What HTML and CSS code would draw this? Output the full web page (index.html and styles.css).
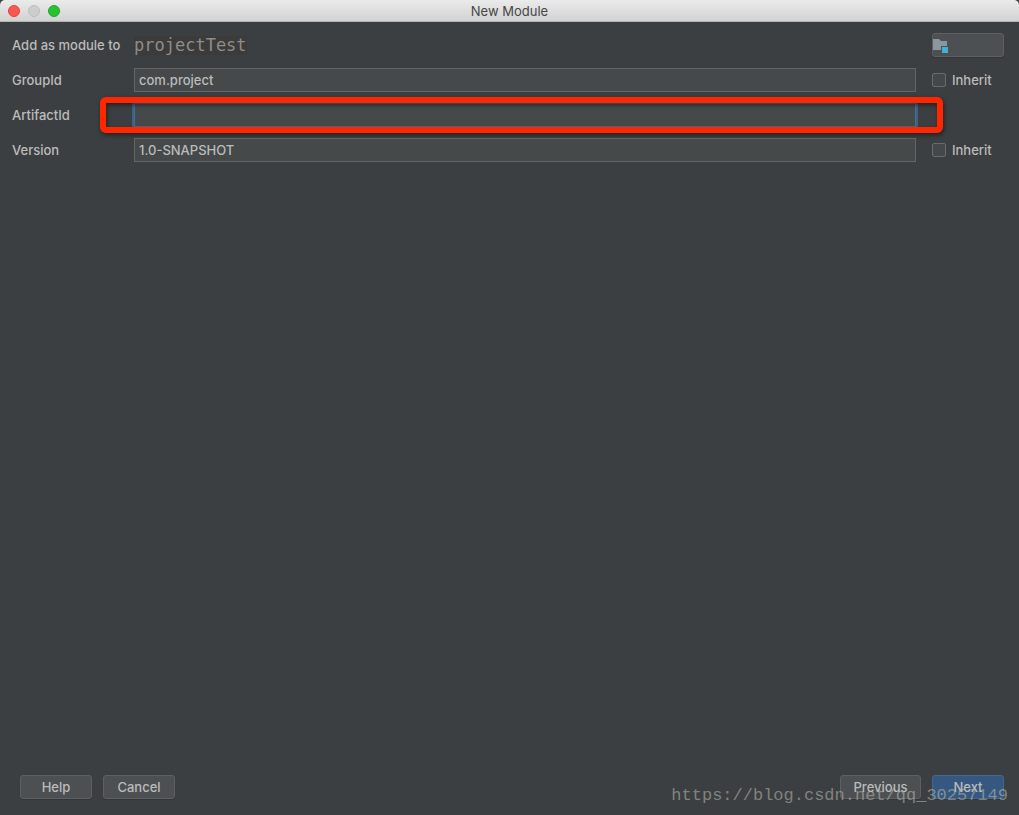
FILE: index.html
```html
<!DOCTYPE html>
<html lang="en">
<head>
	<meta charset="UTF-8">
	<title>New Module</title>
	<link rel="stylesheet" href="styles.css">
</head>
<body>
	<div class="window">
		<header class="titlebar">
			<div class="lights">
				<span class="light close"></span>
				<span class="light minimize"></span>
				<span class="light zoom"></span>
			</div>
			<h1>New Module</h1>
		</header>
		<form class="form">
			<div class="row">
				<span class="label">Add as module to</span>
				<div class="field"><span class="parent">projectTest</span></div>
				<div class="side">
					<button type="button" class="btn browse" aria-label="Choose module">
						<svg width="15" height="16" viewBox="0 0 15 16">
							<path fill="#8b979e" d="M0 2h6l2 2h6v5H8v4H0z"/>
							<path fill="#40b0d8" d="M9 10h6v6H9z"/>
						</svg>
					</button>
				</div>
			</div>
			<div class="row">
				<label class="label" for="group">GroupId</label>
				<div class="field"><input type="text" id="group" value="com.project"></div>
				<label class="side"><input type="checkbox">Inherit</label>
			</div>
			<div class="row">
				<label class="label" for="artifact">ArtifactId</label>
				<div class="field">
					<input type="text" id="artifact" class="active">
					<div class="mark"></div>
				</div>
			</div>
			<div class="row">
				<label class="label" for="version">Version</label>
				<div class="field"><input type="text" id="version" value="1.0-SNAPSHOT"></div>
				<label class="side"><input type="checkbox">Inherit</label>
			</div>
		</form>
		<footer class="footer">
			<button type="button" class="btn">Help</button>
			<button type="button" class="btn">Cancel</button>
			<button type="button" class="btn previous">Previous</button>
			<button type="button" class="btn primary">Next</button>
		</footer>
		<div class="watermark">https://blog.csdn.net/qq_30257149</div>
	</div>
</body>
</html>
```
FILE: styles.css
```css
*{
	box-sizing: border-box;
}
body{
	margin:0;
	background:#3c3f41;
	color:#bbb;
	font-family: Inter, "Liberation Sans", sans-serif;
	font-size: 13px;
	font-weight: 500;
	line-height: 16px;
}
.window{
	position: relative;
	display: flex;
	flex-direction: column;
	min-height: 100vh;
}
.titlebar{
	display: grid;
	grid-template-columns: 1fr auto 1fr;
	align-items: center;
	height: 22px;
	padding: 0 8px;
	background: linear-gradient(#ebebeb, #d2d2d2);
	border-bottom: 1px solid #b4b4b4;
	border-radius: 5px 5px 0 0;
}
.titlebar h1{
	margin:0;
	color:#464646;
	font-size: 13px;
	font-weight: 400;
}
.lights{
	display: flex;
	gap: 8px;
}
.light{
	width: 12px;
	height: 12px;
	border:1px solid #bdbdbd;
	border-radius: 50%;
	background:#cdcdcd;
}
.close{
	background:#fc5650;
	border-color:#e2443e;
}
.zoom{
	background:#28c131;
	border-color:#1aab29;
}
.form{
	flex: 1;
	display: flex;
	flex-direction: column;
	gap: 11px;
	padding: 11px 15px 0 12px;
}
.row{
	display: grid;
	grid-template-columns: 106px 1fr 72px;
	column-gap: 16px;
	align-items: center;
	height: 24px;
}
.label{
	white-space: nowrap;
}
.field{
	position: relative;
}
.field input{
	display: block;
	width: 100%;
	height: 24px;
	padding: 0 4px;
	border:1px solid #646464;
	border-radius: 0;
	background:#45494a;
	color:#bbb;
	font: inherit;
	outline: none;
}
.field .active{
	border-color:#466d94;
	box-shadow: 0 0 0 2px #3d6185;
}
/* red frame over the required field */
.mark{
	position: absolute;
	top: -6px;
	right: -27px;
	bottom: -6px;
	left: -34px;
	border:6px solid #ff2600;
	border-radius: 6px;
	box-shadow: 1px 2px 4px rgba(0,0,0,.5), inset 1px 2px 4px rgba(0,0,0,.5);
	pointer-events: none;
}
.parent{
	display: inline-block;
	background:#3c3b3a;
	color:#8c8c8c;
	font-family: "DejaVu Sans Mono", monospace;
	font-size: 17px;
	font-weight: 400;
	line-height: 19px;
}
.side{
	display: flex;
	align-items: center;
	gap: 6px;
}
.side input{
	appearance: none;
	width: 14px;
	height: 14px;
	margin:0;
	border:1px solid #6b6b6b;
	border-radius: 2px;
	background:#43484a;
}
.btn{
	width: 72px;
	height: 24px;
	padding:0;
	border:1px solid #5e6060;
	border-radius: 3px;
	background:#4c5052;
	box-shadow: 0 1px 1px rgba(0,0,0,.15);
	color:#bbb;
	font: inherit;
}
.browse{
	display: flex;
	align-items: center;
}
.footer{
	display: flex;
	gap: 11px;
	padding: 0 15px 16px 20px;
}
.previous{
	width: 81px;
	margin-left: auto;
}
.primary{
	background:#365880;
	border-color:#42688c;
}
.watermark{
	position: absolute;
	right: 11px;
	bottom: 9px;
	color:rgba(190,190,180,.55);
	font-family: "Liberation Mono", monospace;
	font-size: 17px;
	font-weight: 400;
	line-height: 20px;
	pointer-events: none;
}
```
